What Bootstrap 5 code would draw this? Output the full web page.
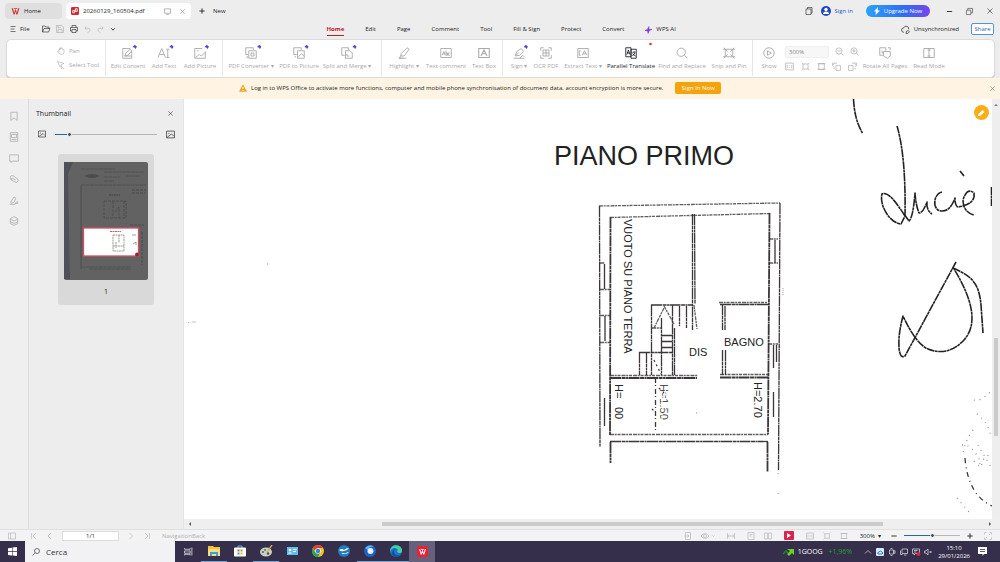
<!DOCTYPE html>
<html lang="en">
<head>
<meta charset="utf-8">
<meta name="viewport" content="width=device-width, initial-scale=1">
<title>20260129_160504.pdf - WPS Office</title>
<link href="https://cdn.jsdelivr.net/npm/bootstrap@5.3.0/dist/css/bootstrap.min.css" rel="stylesheet">
<style>
body{font-family:"Open Sans","Noto Sans",sans-serif;font-size:6px;line-height:10px;background:#ededee;color:#222}
button,input{font:inherit;color:inherit}
button{border:0;background:none;padding:0}
a{color:inherit;text-decoration:none}
svg{display:block;flex:none}
.ic{width:10px;height:10px;fill:none;stroke:currentColor;stroke-width:1.2;overflow:visible}
.i6{width:6px;height:6px}.i7{width:7px;height:7px}.i8{width:8px;height:8px}.i9{width:9px;height:9px}
.bold{stroke-width:2.4}
.faint{color:#aaa}
/* title and menu bars */
.titlebar{height:20px;padding:3px 6px 1px 5px}
.doc-tab{height:16px;border-radius:4px;padding:0 5px}
.tab-home{width:57px;gap:4px;padding-left:6px;background:#dfdfe0}
.tab-doc{width:125px;background:#fff}
.signin{color:#2460b8}
.upgrade{width:64px;height:12px;margin:0 16px 0 13px;border-radius:6px;color:#fff;background:linear-gradient(90deg,#2ba2f5,#2f6df5 60%,#7746ea)}
.winbtns{gap:13px}
.menubar{height:19px;padding:0 6px 0 10px}
.quickbar{gap:6px}
.menu-list{gap:21px;margin-left:211px;padding-top:2px}
.menu-list a{border-bottom:1px solid transparent;line-height:11px}
.menu-list a.active{color:#b9202c;font-weight:700;border-color:#b9202c}
.share{width:23px;border:1px solid #5a91c8;border-radius:2px;color:#236ab0;background:#fff}
/* ribbon */
.ribbon{height:39px;margin:0 5px 0 6px;background:#fff;border:1px solid #dcdcdc;border-radius:5px;color:#a8a8a8;box-shadow:0 1px 1px #ccc}
.pans{width:98px;padding-left:50px;white-space:nowrap}
.rgroup{display:flex;height:36px;border-left:1px solid #e6e6e6}
.g1{width:117px;padding-left:4px}.g2{width:159px;padding-left:4px}.g4{width:250px}
.tool{display:flex;flex:none;flex-direction:column;align-items:center;justify-content:center;gap:2px;white-space:nowrap;padding-top:1px}
.tool .ic{width:12px;height:12px}
.t22{width:22px}.t32{width:32px}.t36{width:36px}.t40{width:40px}.t44{width:44px}.t48{width:48px}.t52{width:52px}.t58{width:58px}
.zoomblk{width:76px}.zoomtop{gap:6px}.zrow{width:72px}
.zoombox{width:44px;height:12px;background:#f7f7f7;border:1px solid #eee;border-radius:2px;padding:0 3px;appearance:none;color:#888;font:inherit}
/* sign-in notice */
.notice{height:21px;background:#fff4e3}
.notice-main{margin-left:239px}
.signnow{width:46px;height:12px;margin-left:12px;border-radius:2px;background:#f5a30c;color:#fff}
/* side panels */
.rail{width:29px;padding-top:12px;gap:11px;border-right:1px solid #dcdcdc;color:#aaa;background:#efeff0}
.thumbs{width:155px;font-size:7px;border-right:1px solid #e4e4e4}
.thumb-head{padding:10px 9px 0 7px}
.thumb-zoom{padding:11px 8px 0 9px;gap:9px}
.page-card{width:96px;height:151px;background:#d9d9d9;border-radius:3px;padding-top:8px;margin-top:15px}
.page-no{margin-top:7px}
input[type=range]{appearance:none;height:8px;background:none;min-width:0}
input[type=range]::-webkit-slider-runnable-track{height:1px;background:linear-gradient(90deg,#27689c var(--fill),#b5b5b5 var(--fill))}
input[type=range]::-webkit-slider-thumb{appearance:none;width:5px;height:5px;margin-top:-2px;border-radius:50%;background:#555;border:1px solid #f5f5f5}
/* document */
.shrinkable{min-width:0;min-height:0}
.vscroll{width:8px;background:#eee;padding-top:4px}
.vthumb{width:4px;height:98px;background:#cbcbcb;margin-top:231px}
.hscroll{height:10px;background:#efefef;padding:0 4px}
.hthumb{width:62%;height:4px;background:#cbcbcb;margin-left:calc(24% - 4px)}
.quick{top:6px;right:3px;width:15px;height:15px;border-radius:50%;background:#f9ad16;color:#fff}
.scan path{fill:none;stroke:#3a3639;stroke-width:1.3}
.scan .heavy{stroke-width:1.8}
.scan .ink path{stroke:#222;stroke-width:1.6}
.scan .erase{stroke:#fff}
.scan text{font-family:"Liberation Sans",sans-serif;fill:#222}
/* status bar */
.status{height:12px;background:#f3f3f4;color:#b0b0b0;padding:0 8px;border-top:1px solid #e0e0e0}
.pagebox{width:57px;height:10px;border:1px solid #ddd;background:#fff;color:#333;text-align:center;padding:0}
.pager{gap:8px;margin:0 11px 0 14px}
.st-tools{gap:9px}
.gapped{margin-left:3px}
.eye{width:17px}
.play{width:10px;height:9px;background:#dc2450;border-radius:1px}
.st-pct{margin:0 10px 0 12px}
.st-range{width:56px;margin:0 7px}
.st-full{margin-left:11px}
/* taskbar */
.taskbar{height:21px;background:#352f4b;color:#fff}
.start{width:25px}
.searchbox{width:150px;height:21px;background:#f2f1f3;color:#222;padding-left:7px;gap:6px}
.searchbox input{border:0;background:none;width:100px;padding:0;outline:0;font-size:8px}
.searchbox input::placeholder{color:#333;opacity:1}
.app{width:26px;height:21px;display:flex;align-items:center;justify-content:center;border-bottom:1px solid transparent}
.app.open{border-color:#76a8d8}
.app.current{background:#65607b}
.tray{gap:4px;padding-right:13px}
.stock{font-size:7px;margin-right:8px}
.up{color:#1fa32f}
.clock{line-height:8px;text-align:center;margin:0 4px 0 2px}
</style>
</head>
<body class="vh-100 d-flex flex-column overflow-hidden">

<svg width="0" height="0" class="position-absolute" aria-hidden="true">
  <defs>
    <symbol id="w" viewBox="0 0 16 14"><path d="M1 2h2.500L5.500 10 8 3l2.500 7L12.500 2H15L11.500 13H9.500L8 8.500 6.500 13h-2zM5 2h6v1.500H5z" fill="currentColor" stroke="none"/></symbol>
    <symbol id="x" viewBox="0 0 16 16"><path d="M3 3l10 10M13 3 3 13"/></symbol>
    <symbol id="bookmark" viewBox="0 0 16 16"><path d="M3 2h10v13l-5-4-5 4z"/></symbol>
    <symbol id="image" viewBox="0 0 16 16"><path d="M1 2h14v12H1zM4 6h2M2 13l8-6 4 4"/></symbol>
    <symbol id="comment" viewBox="0 0 16 16"><path d="M1 3h14v10H6l-3 2v-2H1z"/></symbol>
    <symbol id="fit" viewBox="0 0 16 16"><path d="M3.500 3.500h9v9h-9zM1 1l2.500 2.500M15 1l-2.500 2.500M1 15l2.500-2.500M15 15l-2.500-2.500"/></symbol>
    <symbol id="frame" viewBox="0 0 16 16"><path d="M3 3h10v10H3zM1 3h14M1 13h14"/></symbol>
    <symbol id="one" viewBox="0 0 16 16"><path d="M1 2h14v12H1zM4 5v6M12 5v6M8 6v1M8 9v1"/></symbol>
    <symbol id="zoomout" viewBox="0 0 16 16"><circle cx="7" cy="7" r="5.500"/><path d="m11 11 4 4M4 7h6"/></symbol>
    <symbol id="zoomin" viewBox="0 0 16 16"><circle cx="7" cy="7" r="5.500"/><path d="m11 11 4 4M4 7h6M7 4v6"/></symbol>
    <symbol id="bolt" viewBox="0 0 6 6"><path d="M3 0 6 2.500 3.500 6 3 4 0 3z" fill="#5a46c8" stroke="none"/></symbol>
    <symbol id="caret" viewBox="0 0 16 16"><path d="m3 6 5 5 5-5"/></symbol>
  </defs>
</svg>

<header class="titlebar d-flex align-items-center">
  <button class="doc-tab tab-home d-flex align-items-center"><svg width="9" height="8" color="#d6352b"><use href="#w"/></svg>Home</button>
  <div class="doc-tab tab-doc d-flex align-items-center gap-1 ms-1">
    <svg width="8" height="8" viewBox="0 0 9 9"><rect width="9" height="9" rx="1.500" fill="#d42636"/><path d="M2 6.500V4h3V2h2v3H4v1.500z" fill="none" stroke="#fff"/></svg>
    <span>20260129_160504.pdf</span>
    <svg class="ic i7 ms-auto text-secondary" viewBox="0 0 16 16"><path d="M1 2h14v10H1zM5 15h6"/></svg>
    <button aria-label="Close tab" class="ms-1 text-secondary"><svg class="ic i7"><use href="#x"/></svg></button>
  </div>
  <button class="d-flex align-items-center gap-2 ms-2"><svg class="ic i6 bold" viewBox="0 0 16 16"><path d="M8 1v14M1 8h14"/></svg><span>New</span></button>
  <div class="ms-auto d-flex align-items-center">
    <svg class="ic i8 me-2" viewBox="0 0 16 16"><path d="M2 4h10v11H2zM5 4V1h9v11h-2"/></svg>
    <button class="signin d-flex align-items-center gap-1"><svg width="10" height="10" viewBox="0 0 10 10"><circle cx="5" cy="5" r="5" fill="#1f49c4"/><circle cx="5" cy="3.500" r="1.700" fill="#fff"/><path d="M2 8q0-2.500 3-2.500T8 8z" fill="#fff"/></svg>Sign in</button>
    <button class="upgrade d-flex align-items-center justify-content-center gap-1"><svg width="6" height="8" viewBox="0 0 6 8"><path d="M4 0 0 4.500h2L1.500 8 6 3.500H3.500z" fill="#fff"/></svg>Upgrade Now</button>
    <div class="winbtns d-flex">
      <button aria-label="Minimise"><svg class="ic i7" viewBox="0 0 16 16"><path d="M2 8h12" stroke-width="2"/></svg></button>
      <button aria-label="Restore"><svg class="ic i7" viewBox="0 0 16 16"><path d="M1 5h10v10H1zM4 5V1h11v10h-4"/></svg></button>
      <button aria-label="Close"><svg class="ic i8"><use href="#x"/></svg></button>
    </div>
  </div>
</header>

<nav class="menubar d-flex align-items-center" aria-label="Main menu">
  <button class="d-flex align-items-center gap-1"><svg class="ic i6" viewBox="0 0 12 12"><path d="M1 1h10M1 6h8M1 11h10"/></svg>File</button>
  <div class="quickbar d-flex align-items-center ms-2 ps-1">
    <svg class="ic i8" viewBox="0 0 16 16"><path d="M1 14V2h5l2 2h6v3M1 14 4 7h12l-3 7z"/></svg>
    <svg class="ic i8 faint" viewBox="0 0 16 16"><path d="M1 1h11l3 3v11H1zM4 15V9h8v6M4 1v4h6"/></svg>
    <svg class="ic i8" viewBox="0 0 16 16"><path d="M4 5V1h8v4M4 12H1V5h14v7h-3M4 9h8v6H4z"/></svg>
    <svg class="ic i7 faint" viewBox="0 0 16 16"><path d="M5 1 2 5l4 3M2 5h7q5 0 5 4t-6 6"/></svg>
    <svg class="ic i7 faint" viewBox="0 0 16 16"><path d="m11 1 3 4-4 3M14 5H7q-5 0-5 4t6 6"/></svg>
    <svg class="ic i6 bold"><use href="#caret"/></svg>
  </div>
  <div class="menu-list d-flex">
    <a href="#" class="active">Home</a><a href="#">Edit</a><a href="#">Page</a><a href="#">Comment</a><a href="#">Tool</a><a href="#">Fill &amp; Sign</a><a href="#">Protect</a><a href="#">Convert</a>
    <a href="#" class="d-flex align-items-center gap-1"><svg width="7" height="8" viewBox="0 0 8 8"><path d="M4.500 0v3L8 3.500 5 4.500 3.500 8 3 5 0 4.500 3 3z" fill="#8137d8" stroke="#8137d8" stroke-width=".6"/></svg>WPS AI</a>
  </div>
  <div class="d-flex align-items-center gap-1 ms-auto">
    <svg class="ic i9" viewBox="0 0 16 16"><path d="M5 13Q1 13 1 9t4-4q1-3 4-3 5 0 5 6"/><path d="M9 15q-1-5 4-5l2 2-3 3z"/></svg><span>Unsynchronized</span>
    <button class="share ms-2">Share</button>
  </div>
</nav>

<section class="ribbon d-flex align-items-center" aria-label="Tools">
  <div class="pans">
    <button class="d-flex align-items-center gap-1"><svg class="ic i8" viewBox="0 0 16 16"><path d="M4 9V4q2-2 2 2V2q2-2 2 2V2q2-2 3 2v1q2-1 3 1v5q-1 4-5 4-4 0-8-6 2-2 3 0"/></svg>Pan</button>
    <button class="d-flex align-items-center gap-1 mt-1"><svg class="ic i8" viewBox="0 0 16 16"><path d="M6 12 1 1l13 4-5 2zM9 9v6l2-2 3 3"/></svg>Select Tool</button>
  </div>
  <div class="rgroup g1">
    <button class="tool t36"><svg class="ic" viewBox="0 0 16 16"><path d="M13 5v10H1V2h10M4 12l1-4 6-5 2 2-5 6zM3 12h9"/><use href="#bolt" x="14" y="-3" width="6" height="6"/></svg>Edit Content</button>
    <button class="tool t36"><svg class="ic" viewBox="0 0 16 16"><path d="M0 14 5 2l5 12M2 10h6M13 3v11M11 3h4M11 14h4"/><use href="#bolt" x="15" y="-3" width="6" height="6"/></svg>Add Text</button>
    <button class="tool t36"><svg class="ic" viewBox="0 0 16 16"><path d="M15 6v9H1V2h10M4 5h2M2 14l5-4 3 2 5-5"/><use href="#bolt" x="14" y="-3" width="6" height="6"/></svg>Add Picture</button>
  </div>
  <div class="rgroup g2">
    <button class="tool t48"><svg class="ic" viewBox="0 0 16 16"><path d="M4 10H1V1h10v3M5 5h10v10H5zM3 12v3M8 8h4v4H8z"/><use href="#bolt" x="16" y="-3" width="6" height="6"/></svg>PDF Converter ▾</button>
    <button class="tool t48"><svg class="ic" viewBox="0 0 16 16"><path d="M5 10H1V1h10v3M6 5h9v10H6zM7 13l4-4 4 3M3 12v2"/><use href="#bolt" x="15" y="-3" width="6" height="6"/></svg>PDF to Picture</button>
    <button class="tool t48"><svg class="ic" viewBox="0 0 16 16"><path d="M5 11H1V1h9v3M6 5h6l3 3v7H6zM8 9v3h3"/><use href="#bolt" x="15" y="-3" width="6" height="6"/></svg>Split and Merge ▾</button>
  </div>
  <div class="rgroup">
    <button class="tool t44"><svg class="ic" viewBox="0 0 16 16"><path d="m4 9 8-8 3 2-7 9H4zM4 11l-2 4h5M1 15h10"/></svg>Highlight ▾</button>
    <button class="tool t40"><svg class="ic" viewBox="0 0 16 16"><path d="M1 2h14v12H1zM3 11l2-5 2 5M4 9h3M8 5v6h2V8H8M13 8h-2v3h2"/></svg>Text comment</button>
    <button class="tool t36"><svg class="ic" viewBox="0 0 16 16"><path d="M1 2h14v12H1zM4 12l4-8 4 8M6 9h5" stroke-width="1.400"/></svg>Text Box</button>
  </div>
  <div class="rgroup g4">
    <button class="tool t32"><svg class="ic" viewBox="0 0 16 16"><path d="m3 12 2-6 6-4 3 4-5 5zM3 12l5-5M1 15h14M9 15l4-4 2 2"/><use href="#bolt" x="14" y="-3" width="6" height="6"/></svg>Sign ▾</button>
    <button class="tool t22"><svg class="ic" viewBox="0 0 16 16"><path d="M1 5V1h4M11 1h4v4M15 11v4h-4M5 15H1v-4M4 4h8v8H4zM4 8h8M8 4v8"/></svg>OCR PDF</button>
    <button class="tool t52"><svg class="ic" viewBox="0 0 16 16"><path d="M1 2h14v12H1zM5 5H3v6h2M7 11l3-6 3 6M8 9h4"/></svg>Extract Text ▾</button>
    <button class="tool t44 text-dark"><svg class="ic" viewBox="0 0 16 16"><path d="M1 1h7v12H1zM8 3h7v12H8zM2.500 10l2-6 2 6M3 8h3M10 7h4M12 6v1M10 9l4 3M13 8l-3 4"/><circle cx="34" cy="-4" r="1.800" fill="#d43b3b" stroke="none"/></svg>Parallel Translate</button>
    <button class="tool t58"><svg class="ic" viewBox="0 0 16 16"><circle cx="7" cy="7" r="5.500"/><path d="m11 11 4 4"/></svg>Find and Replace</button>
    <button class="tool t36"><svg class="ic" viewBox="0 0 16 16"><path d="M3 3h10v10H3zM1 1l5 5M15 1l-5 5M1 15l5-5M15 15l-5-5M0 3h3M13 3h3M0 13h3M13 13h3"/></svg>Snip and Pin</button>
  </div>
  <div class="rgroup">
    <button class="tool t32"><svg class="ic" viewBox="0 0 16 16"><circle cx="8" cy="8" r="7"/><path d="M6 5v6l5-3z"/></svg>Show</button>
    <div class="zoomblk d-flex flex-column justify-content-center gap-1">
      <div class="zoomtop d-flex align-items-center">
        <select class="zoombox" aria-label="Zoom"><option>300%</option></select>
        <svg class="ic i9"><use href="#zoomout"/></svg><svg class="ic i9"><use href="#zoomin"/></svg>
      </div>
      <div class="d-flex justify-content-between zrow">
        <svg class="ic i9"><use href="#one"/></svg><svg class="ic i9"><use href="#fit"/></svg><svg class="ic i9"><use href="#frame"/></svg>
        <svg class="ic i9" viewBox="0 0 16 16"><path d="M7 6h8v9H7zM4 3l-3 3 3 3M1 6V2h8M5 11H2"/></svg>
        <svg class="ic i9" viewBox="0 0 16 16"><path d="M1 6h8v9H1zM12 3l3 3-3 3M15 6V2H7M11 12h3"/></svg>
      </div>
    </div>
    <button class="tool t48"><svg class="ic" viewBox="0 0 16 16"><path d="M5 11H1V1h8v4M6 6h9v6l-4 3-5-3zM12 1h3v3M4 5v3h2"/></svg>Rotate All Pages</button>
    <button class="tool t40"><svg class="ic" viewBox="0 0 16 16"><path d="M1 2h14v12H1zM8 2v12M6 4h4M6 12h4"/></svg>Read Mode</button>
  </div>
</section>

<div class="notice d-flex align-items-center" role="alert">
  <div class="notice-main d-flex align-items-center gap-1">
    <svg width="8" height="8" viewBox="0 0 8 8"><path d="M4 .3 8 7.700H0z" fill="#f0a51e"/><path d="M4 3v2M4 6v1" stroke="#fff"/></svg>
    <span>Log in to WPS Office to activate more functions, computer and mobile phone synchronisation of document data, account encryption is more secure.</span>
  </div>
  <button class="signnow">Sign In Now</button>
  <button class="ms-auto me-1 text-secondary" aria-label="Dismiss"><svg class="ic i7"><use href="#x"/></svg></button>
</div>

<main class="shrinkable d-flex flex-grow-1">
  <aside class="rail d-flex flex-column align-items-center">
    <svg class="ic"><use href="#bookmark"/></svg>
    <svg class="ic" viewBox="0 0 16 16"><path d="M2 1h12v14H2zM4 4h8v5H4zM4 12h8"/></svg>
    <svg class="ic"><use href="#comment"/></svg>
    <svg class="ic" viewBox="0 0 16 16"><path d="M2 5Q3 1 7 3l7 5q2 3-1 5-2 1-5-1L4 9q-1-3 2-2l5 3"/><path d="M2 5q-1 3 3 6"/></svg>
    <svg class="ic" viewBox="0 0 16 16"><path d="m3 11 5-8 3 2-3 7-5 1zM1 15h9M10 14q1-4 4-3 2 3-4 3"/></svg>
    <svg class="ic" viewBox="0 0 16 16"><path d="m8 1 6 3v8l-6 3-6-3V4zM2 5l6 3 6-3M2 9l6 3 6-3"/></svg>
  </aside>
  <aside class="thumbs d-flex flex-column align-items-center">
    <div class="thumb-head w-100 d-flex align-items-center justify-content-between"><span>Thumbnail</span><button aria-label="Close panel"><svg class="ic i7"><use href="#x"/></svg></button></div>
    <div class="thumb-zoom w-100 d-flex align-items-center"><svg class="ic i8"><use href="#image"/></svg><input type="range" class="flex-grow-1" aria-label="Thumbnail size" value="12" style="--fill:12%"><svg class="ic i9"><use href="#image"/></svg></div>
    <div class="page-card d-flex flex-column align-items-center">
      <svg width="84" height="118" viewBox="0 0 84 118">
        <rect width="84" height="118" rx="2" fill="#626262"/>
        <path d="M0 0h9L4 12 6 117H0z" fill="#50505a"/><path d="M17 24v83" stroke="#484848" stroke-width=".8"/>
        <path d="M17 7h34M40 10h40M17 23h65M40 15h16M62 14h14M40 19h10M17 105h50M25 107h42" stroke="#484848" stroke-width=".6" stroke-dasharray="4 .5"/>
        <path d="M20 14q8-4 16 0-8 4-16 0" fill="#4b4b4b"/><path d="M68 28h14M68 31h13M66 63h14M78 70v33" stroke="#4b4b4b" stroke-dasharray="3 1"/>
        <path d="M40 39h22v17H40zM49 39v17M51 50l4-5v11M60 39v17" fill="none" stroke="#444" stroke-width=".6" stroke-dasharray="3 1"/><path d="M45 33h11" stroke="#404040" stroke-dasharray="2 .5"/>
        <rect x="19.500" y="66" width="55" height="28" fill="#fff" stroke="#d34d64" stroke-width="1.300"/>
        <path d="M46 69.500h11" stroke="#b66" stroke-dasharray="2 .5"/><path d="M49 73h11v16H49zM55 73v8M49 84h11M52 80v6" fill="none" stroke="#777" stroke-width=".7" stroke-dasharray="2 .5"/>
        <path d="M68 73h4M69 82l3-2v3" stroke="#777" fill="none" stroke-width=".7"/><circle cx="73" cy="92.500" r="2" fill="#a31e3a"/>
      </svg>
      <span class="page-no">1</span>
    </div>
  </aside>

  <section class="shrinkable flex-grow-1 d-flex flex-column">
    <div class="shrinkable d-flex flex-grow-1">
      <div class="shrinkable flex-grow-1 bg-white position-relative overflow-hidden">
        <svg class="scan w-100 h-100" viewBox="184 99 808 421" preserveAspectRatio="xMinYMin slice" role="img" aria-label="Scanned floor plan">
          <text x="554" y="165" font-size="27">PIANO PRIMO</text>
          <g stroke-dasharray="11 .6 4 .5 2 .4">
            <path d="M599.500 206 600 447M780 203 778.500 470"/>
            <path d="M610.500 217 610 435M769.500 213 768 435" class="heavy"/>
            <path d="M692.500 214v116M694.500 214l.5 90"/>
            <path d="M610.500 442v21M767.500 442v30" class="heavy"/>
            <path d="M651.500 305v70M661.500 318v57M672.500 305v70M674.500 328v47M679.500 306v20M686.500 306v22M651 305h41"/>
            <path d="M661 335.500h12M661 341.500h12M661 347.500h12M639 352.500h34M639.500 352v23M646.500 352v23"/>
            <path d="M720 304.500h49M722.500 304v26M725 306v24M722.500 350v25M725.500 350v25"/>
            <path d="M610 378h87M720 377.500h48" class="heavy"/>
            <path d="M610 441.500h158"/>
          </g>
          <g stroke-dasharray="4 .7 2 .8 3 1" opacity=".8">
            <path d="M599 206l181-3M610 217.500l160-4M610 375.500h88M720 374.500h48M610 434.500h158M719 302.500h48M694 305l3 24M664 306l10 18"/>
            <path d="M600 263h5M600 289.500h10M600 315.500h10M600 342.500h10M769 239h9M769 263h9M768 344h10M652 328h10M664 308l-10 20"/>
          </g>
          <path d="M604.500 264v25M605 316v25M604.500 398v28M775 240v23M773.500 345v23M773.500 392v25M776.500 345v17"/>
          <path d="M655.500 378v55" stroke-dasharray="5 2 1 3"/>
          <path d="M654 360l7 14M652 409l3 3M659 388l5 5" stroke-dasharray="2 3"/>
          <text transform="translate(624 219) rotate(90)" font-size="11">VUOTO SU PIANO TERRA</text>
          <text transform="translate(615 384) rotate(90)" font-size="11">H=</text><text transform="translate(615 407) rotate(90)" font-size="11">00</text>
          <text transform="translate(660 384) rotate(90)" font-size="11" opacity=".8">H=1.50</text>
          <path d="M662 382v38M665.500 389v29" class="erase" stroke-dasharray="2 2.500"/>
          <text transform="translate(754 382) rotate(90)" font-size="11">H=2.70</text>
          <text x="689" y="356" font-size="11">DIS</text><text x="724" y="346" font-size="11">BAGNO</text>
          <g class="ink" stroke-linejoin="round" stroke-dasharray="8 .5 3 .5">
            <path d="M853.500 99q1 21 9 34"/>
            <path d="M897 126q9 30 8 90"/>
            <path d="M905 216C896 202 888 191 882 194 879 204 889 223 901 224l4-8M904 214l5 7q4-3 6-28 1 13 4 20 4 0 8-11-1 8 5 12M942 192c-9 2-10 18-1 19q9 1 14-13 0 8 3 9 18-3 16-14-7-6-11 7 0 12 11 15M960 171l4 5"/>
            <path d="M991.500 187v19"/>
            <path d="M956 262 905 356q-7 4-6-18 1-11 4-22 13 28 25 33 20 8 36-9 20-22-10-71"/>
            <path d="M953 268c18 8 26 14 28 37l2 28"/>
          </g>
          <path d="M965 458q3 37 27 48" stroke-dasharray="5 4 1 4"/>
          <path d="M974 461q8 8 6 5t10-12M957 498l12 14M974 400q6 2 16-8M977 414q12 9 14 24M962 445q10-2 20 20M973 430q-9 12-10 25M978 445l13 22" stroke-dasharray=".8 5" opacity=".65"/>
          <path d="M192.500 322h3M188.500 322v1M267 264h1M778 473v1M778 493v1M696 413h1M783 288v8" opacity=".4" stroke-dasharray="1 1"/>
        </svg>
        <button class="quick position-absolute d-flex align-items-center justify-content-center" aria-label="Edit"><svg width="9" height="9" viewBox="0 0 9 9"><path d="M1 6.500 5.500 2l2 2L3 8H1z" fill="#fff"/></svg></button>
      </div>
      <div class="vscroll d-flex flex-column align-items-center"><svg width="4" height="4" viewBox="0 0 4 4"><path d="M0 3h4L2 1z" fill="#777"/></svg><div class="vthumb"></div></div>
    </div>
    <div class="hscroll d-flex align-items-center"><svg width="4" height="4" viewBox="0 0 4 4"><path d="M3 0v4L1 2z" fill="#555"/></svg><div class="hthumb"></div><svg class="ms-auto me-1" width="4" height="4" viewBox="0 0 4 4"><path d="M1 0v4l2-2z" fill="#555"/></svg></div>
  </section>
</main>

<footer class="status d-flex align-items-center">
  <svg class="ic i8" viewBox="0 0 16 16"><path d="M1 2h14v12H1zM5 2v12"/></svg>
  <div class="pager d-flex align-items-center">
    <svg class="ic i8" viewBox="0 0 16 16"><path d="M3 2v12M12 2 6 8l6 6"/></svg>
    <svg class="ic i8" viewBox="0 0 16 16"><path d="m10 2-6 6 6 6"/></svg>
    <input class="pagebox" aria-label="Page" value="1/1">
    <svg class="ic i8" viewBox="0 0 16 16"><path d="m5 2 6 6-6 6"/></svg>
    <svg class="ic i8" viewBox="0 0 16 16"><path d="M13 2v12M4 2l6 6-6 6"/></svg>
  </div>
  <span>NavigationBack</span>
  <div class="ms-auto d-flex align-items-center st-tools">
    <svg class="ic i8" viewBox="0 0 16 16"><path d="M3 1h10v14H3zM1 8h8M7 5l3 3-3 3"/></svg>
    <svg class="ic i8 eye" viewBox="0 0 34 16"><path d="M0 8q8-10 16 0-8 10-16 0M23 7l2 2 2-2"/><circle cx="8" cy="8" r="3"/></svg>
    <svg class="ic i8" viewBox="0 0 16 16"><path d="M1 2v12M15 2v12M1 8h14M4 5 1 8l3 3M12 5l3 3-3 3"/></svg>
    <svg class="ic i8 gapped" viewBox="0 0 16 16"><path d="M2 1h12v14H2zM5 5h6M5 8h4"/></svg>
    <svg class="ic i8" viewBox="0 0 16 16"><path d="M1 2h6v12H1zM9 2h6v12H9z"/></svg>
    <button class="play gapped d-flex align-items-center justify-content-center" aria-label="Play"><svg width="5" height="5" viewBox="0 0 5 5"><path d="M1 0v5l4-2.500z" fill="#fff"/></svg></button>
    <svg class="ic i8 gapped"><use href="#one"/></svg><svg class="ic i8"><use href="#fit"/></svg><svg class="ic i8"><use href="#frame"/></svg>
  </div>
  <span class="text-dark st-pct">300% &nbsp;▾</span>
  <svg class="ic i6 bold text-dark" viewBox="0 0 16 16"><path d="M1 8h14"/></svg>
  <input type="range" aria-label="Zoom" value="50" class="st-range" style="--fill:50%">
  <svg class="ic i6 bold text-dark" viewBox="0 0 16 16"><path d="M1 8h14M8 1v14"/></svg>
  <svg class="ic i8 st-full" viewBox="0 0 16 16"><path d="M1 5V1h4M11 1h4v4M15 11v4h-4M5 15H1v-4M10 6l3-3M6 10l-3 3"/></svg>
</footer>

<div class="taskbar d-flex align-items-center">
  <button class="start d-flex justify-content-center" aria-label="Start"><svg width="9" height="9" viewBox="0 0 9 9"><path d="M0 1.200 4 .7v3.600H0zM4.600.6 9 0v4.300H4.600zM0 4.900h4v3.500L0 7.900zM4.600 4.900H9V9l-4.400-.6z" fill="#fff"/></svg></button>
  <label class="searchbox d-flex align-items-center"><svg class="ic i8" viewBox="0 0 16 16"><circle cx="10" cy="6" r="5"/><path d="m6 10-5 5"/></svg><input type="text" placeholder="Cerca" aria-label="Cerca"></label>
  <button class="app" aria-label="Task view"><svg class="ic i9" viewBox="0 0 16 16"><path d="M1 2v2h10V2M1 7h10v4H1zM1 15v-2h10v2M14 1v14"/></svg></button>
  <button class="app open" aria-label="Files"><svg width="12" height="10" viewBox="0 0 12 10"><path d="M0 0h5l1 1h6v9H0z" fill="#f3c33d"/><path d="M0 3h12v7H0z" fill="#fbdc76"/><path d="M2 6h8v4H8V8H4v2H2z" fill="#3c9be2"/></svg></button>
  <button class="app" aria-label="Store"><svg width="12" height="12" viewBox="0 0 12 12"><path d="M4 3V1h4v2" fill="none" stroke="#5bb4ee"/><rect y="2.500" width="12" height="9" rx="1" fill="#fff"/><path d="M3.500 4.500h2v2h-2z" fill="#e64b2c"/><path d="M6.500 4.500h2v2h-2z" fill="#7ab52f"/><path d="M3.500 7.500h2v2h-2z" fill="#2b9be0"/><path d="M6.500 7.500h2v2h-2z" fill="#f3b71c"/></svg></button>
  <button class="app open" aria-label="Paint"><svg width="13" height="12" viewBox="0 0 13 12"><ellipse cx="6" cy="7" rx="6" ry="4.500" fill="#c8d0c4"/><circle cx="3" cy="7" r="1" fill="#467"/><circle cx="5" cy="5" r="1" fill="#386"/><circle cx="8" cy="8.500" r="1.200" fill="#59483c"/><path d="m7 7 5-7" stroke="#d9a760" stroke-width="1.300"/></svg></button>
  <button class="app" aria-label="Contacts"><svg width="11" height="8" viewBox="0 0 11 8"><rect width="11" height="8" fill="#63bde8"/><circle cx="3" cy="3" r="1.200" fill="#fff"/><path d="M1.500 6h3M6 2.500h3.500M6 4.500h3" stroke="#fff"/></svg></button>
  <button class="app" aria-label="Chrome"><svg width="12" height="12" viewBox="0 0 12 12"><circle cx="6" cy="6" r="6" fill="#f4c31e"/><path d="M.8 3A6 6 0 0 1 11.200 3H6L4 7z" fill="#df4032"/><path d="M.8 3A6 6 0 0 0 6 12l2.500-5H3z" fill="#29a551"/><circle cx="6" cy="6" r="2.800" fill="#fff"/><circle cx="6" cy="6" r="2.200" fill="#367fe8"/></svg></button>
  <button class="app" aria-label="OpenOffice"><svg width="12" height="12" viewBox="0 0 12 12"><circle cx="6" cy="6" r="6" fill="#1d7dbd"/><path d="M1 5q3-2 5 0 2-2 5-2-2 3-5 3-3 1-5-1M3 8.500q2-1 4 0 2-1.500 4-1.500-2 3-8 1.500" fill="#fff"/></svg></button>
  <button class="app open" aria-label="Thunderbird"><svg width="12" height="12" viewBox="0 0 12 12"><circle cx="6" cy="6" r="6" fill="#1b62c9"/><path d="M1 3Q6-2 10 2q-5-1-6 3Z" fill="#58b6f2"/><circle cx="6.500" cy="6" r="3" fill="#e9f3fd"/></svg></button>
  <button class="app open" aria-label="Edge"><svg width="12" height="12" viewBox="0 0 12 12"><circle cx="6" cy="6" r="6" fill="#1976ce"/><path d="M0 5Q2-1 8 .4q5 2 4 6.600-2 2-5 0 2-4-2-4-4 0-5 4z" fill="#45cfa0"/><path d="M4 6q0 5 6 4-4 4-8 0Q1 6 5 4z" fill="#184f9f"/></svg></button>
  <button class="app current" aria-label="WPS Office"><svg width="11" height="11" viewBox="0 0 11 11" color="#fff"><rect width="11" height="11" rx="1.500" fill="#ee1f35"/><use href="#w" x="1.500" y="2" width="8" height="7"/></svg></button>
  <div class="ms-auto d-flex align-items-center tray">
    <svg width="11" height="8" viewBox="0 0 11 8"><path d="M0 6l3-3 2 2" fill="none" stroke="#198f2c" stroke-width="1.500"/><path d="M4 1h7v6L9 5 6 8 4 6l3-3z" fill="#6bd21f"/></svg>
    <span class="stock">1GOOG <span class="up ms-1">+1,96%</span></span>
    <svg class="ic i8" viewBox="0 0 16 16"><path d="m2 11 6-6 6 6"/></svg>
    <svg width="8" height="8" viewBox="0 0 8 8"><rect width="8" height="8" rx="1" fill="#d8ecfb"/><path d="M2 6q-1-2 1-2 1-2 3 0 2 1 0 2z" fill="none" stroke="#2d7fce"/></svg>
    <svg class="ic i8" viewBox="0 0 16 16"><path d="M3 4h8v8H3zM11 7l3-2v6l-3-2M5 1h4M5 15h4"/></svg>
    <svg class="ic i8" viewBox="0 0 16 16"><path d="M4 2h11v9H4zM1 5v8h4M8 14h5"/></svg>
    <svg class="ic i8" viewBox="0 0 16 16"><path d="M1 2h14v9H7l-3 3v-3H1zM4 5h7M4 8h5"/><circle cx="13" cy="12" r="4" fill="#d7263d" stroke="none"/></svg>
    <svg class="ic i8" viewBox="0 0 16 16"><path d="M1 6h3l4-4v12l-4-4H1zM11 6l4 4M15 6l-4 4"/></svg>
    <div class="clock">15:10<br>29/01/2026</div>
    <svg width="9" height="9" viewBox="0 0 9 9"><path d="M0 0h9v7H6L4.500 9V7H0z" fill="#fff"/><path d="M2 2.500h5M2 4.500h5" stroke="#352f4b" stroke-width=".8"/></svg>
  </div>
</div>

<script src="https://cdn.jsdelivr.net/npm/bootstrap@5.3.0/dist/js/bootstrap.bundle.min.js"></script>
</body>
</html>
